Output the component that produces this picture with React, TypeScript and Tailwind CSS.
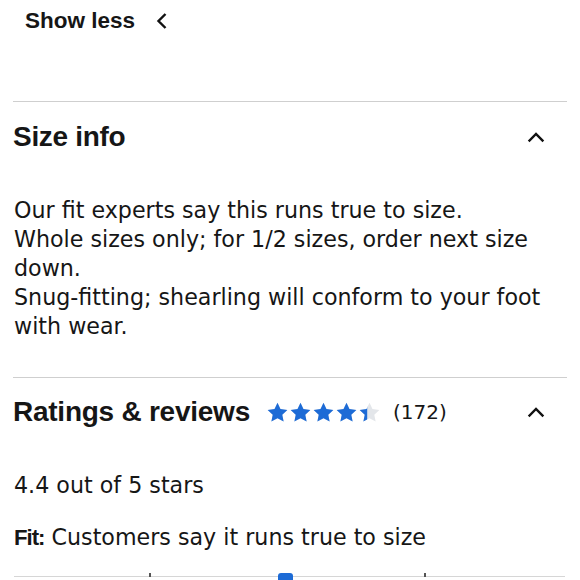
import React from 'react';

const STAR = 'M12 1.8l3.1 6.6 7.2.9-5.3 5 1.4 7.1L12 17.9l-6.4 3.5L7 14.3l-5.3-5 7.2-.9z';

function Star({ fill }: { fill: number }) {
  const id = `clip-${Math.round(fill * 100)}`;
  return (
    <svg width="23" height="23" viewBox="0 0 24 24" className="shrink-0">
      <defs>
        <clipPath id={id}>
          <rect x="0" y="0" width={24 * fill} height="24" />
        </clipPath>
      </defs>
      <path d={STAR} fill="#e3e6ea" />
      <path d={STAR} fill="#1d6bd6" clipPath={`url(#${id})`} />
    </svg>
  );
}

function ChevronUp() {
  return (
    <svg width="20" height="20" viewBox="0 0 20 20" fill="none" stroke="#111" strokeWidth="2.4" strokeLinecap="square">
      <path d="M3.5 13.5L10 7l6.5 6.5" />
    </svg>
  );
}

const body = { fontFamily: '"DejaVu Sans", sans-serif' };
const head = { fontFamily: '"Liberation Sans", Arial, sans-serif' };

export default function App() {
  const rating = 4.4;
  return (
    <div className="w-[580px] h-[580px] overflow-hidden bg-white text-[#161616]">
      {/* show less */}
      <div className="flex items-center h-[42px] pl-[25px]" style={head}>
        <span className="text-[22.5px] font-bold">Show less</span>
        <svg width="14" height="18" viewBox="0 0 14 18" fill="none" stroke="#111" strokeWidth="2.4" className="ml-[20px]">
          <path d="M10.5 2L3.5 9l7 7" />
        </svg>
      </div>

      <div className="mx-[13px] mt-[59px] border-t border-[#cfcfcf]" />

      {/* size info */}
      <div className="flex items-center justify-between pl-[13px] pr-[34px] h-[70px]">
        <h2 className="text-[28px] font-bold tracking-[-0.3px]" style={head}>Size info</h2>
        <ChevronUp />
      </div>

      <div className="pl-[14px] pr-[8px] pt-[24px] text-[22.2px] leading-[29px]" style={body}>
        <p>Our fit experts say this runs true to size.</p>
        <p>Whole sizes only; for 1/2 sizes, order next size down.</p>
        <p>Snug-fitting; shearling will conform to your foot with wear.</p>
      </div>

      <div className="mx-[13px] mt-[36px] border-t border-[#cfcfcf]" />

      {/* ratings */}
      <div className="flex items-center justify-between pl-[13px] pr-[34px] h-[68px]">
        <div className="flex items-center">
          <h2 className="text-[28px] font-bold tracking-[-0.25px]" style={head}>Ratings &amp; reviews</h2>
          <div className="flex items-center ml-[16px]">
            {[0, 1, 2, 3, 4].map(i => (
              <Star key={i} fill={Math.max(0, Math.min(1, rating - i))} />
            ))}
          </div>
          <span className="ml-[12px] text-[20px]" style={body}>(172)</span>
        </div>
        <ChevronUp />
      </div>

      <p className="pl-[14px] mt-[25px] text-[22.2px] leading-[29px]" style={body}>4.4 out of 5 stars</p>

      <p className="pl-[14px] mt-[23px] text-[22.2px] leading-[29px]" style={body}>
        <span className="font-bold tracking-[-1px]" style={head}>Fit:</span> Customers say it runs true to size
      </p>

      {/* fit scale */}
      <div className="relative mx-[14px] mt-[16px] h-[10px]">
        <div className="absolute left-0 right-[1px] bottom-[1px] border-t border-[#d6d6d6]" />
        <div className="absolute left-[135px] bottom-[1px] w-[2px] h-[4px] bg-[#555]" />
        <div className="absolute left-[410px] bottom-[1px] w-[2px] h-[4px] bg-[#555]" />
        <div className="absolute left-[264px] top-[5px] w-[15px] h-[12px] rounded-[3px] bg-[#1d6bd6]" />
      </div>
    </div>
  );
}
